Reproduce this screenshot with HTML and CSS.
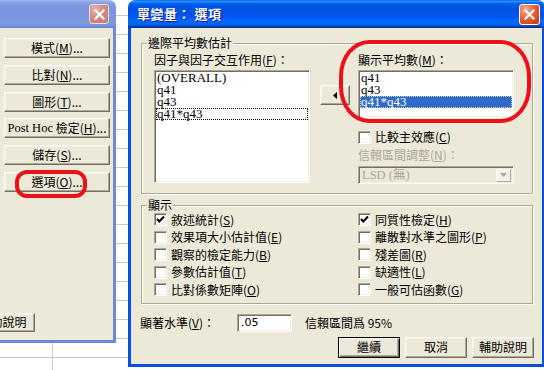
FILE: index.html
```html
<!DOCTYPE html>
<html>
<head>
<meta charset="utf-8">
<title>單變量：選項</title>
<link rel="stylesheet" href="styles.css">
</head>
<body>
<div class="desktop">
  <div class="sheet"></div>

  <div class="win win-back">
    <div class="titlebar inactive">
      <span></span>
      <span class="close close-inactive"><svg width="11" height="11" viewBox="0 0 11 11"><path d="M1.5 1.5 L9.5 9.5 M9.5 1.5 L1.5 9.5" stroke="#fff" stroke-width="2.2" stroke-linecap="square"/></svg></span>
    </div>
    <div class="win-body back-body">
      <div class="btn-stack">
        <button type="button" class="btn">模式(<u>M</u>)...</button>
        <button type="button" class="btn">比對(<u>N</u>)...</button>
        <button type="button" class="btn">圖形(<u>T</u>)...</button>
        <button type="button" class="btn"><span class="serif">Post Hoc</span>&nbsp;檢定(<u>H</u>)...</button>
        <button type="button" class="btn">儲存(<u>S</u>)...</button>
        <button type="button" class="btn">選項(<u>O</u>)...</button>
      </div>
      <button type="button" class="btn help-back">輔助說明</button>
    </div>
  </div>

  <div class="win win-main">
    <div class="titlebar active">
      <span class="title">單變量： 選項</span>
      <span class="close"><svg width="11" height="11" viewBox="0 0 11 11"><path d="M1.5 1.5 L9.5 9.5 M9.5 1.5 L1.5 9.5" stroke="#fff" stroke-width="2.2" stroke-linecap="square"/></svg></span>
    </div>
    <div class="win-body main-body">
      <fieldset class="group g-est">
        <legend>邊際平均數估計</legend>
        <div class="est-cols">
          <div class="col-left">
            <div class="lbl">因子與因子交互作用(<u>F</u>)：</div>
            <div class="listbox lb-left">
              <div class="item">(OVERALL)</div>
              <div class="item">q41</div>
              <div class="item">q43</div>
              <div class="item focus">q41*q43</div>
            </div>
          </div>
          <button type="button" class="btn arrow-btn"><svg width="4" height="7" viewBox="0 0 4 7"><polygon points="4,0 4,7 0,3.5" fill="#000"/></svg></button>
          <div class="col-right">
            <div class="lbl">顯示平均數(<u>M</u>)：</div>
            <div class="listbox lb-right">
              <div class="item">q41</div>
              <div class="item">q43</div>
              <div class="item selected">q41*q43</div>
            </div>
            <div class="chk chk-compare"><span class="box"></span>比較主效應(<u>C</u>)</div>
            <div class="lbl disabled adj-lbl">信賴區間調整(<u>N</u>)：</div>
            <div class="combo"><span class="combo-text">LSD (無)</span><span class="dd"><svg width="7" height="4" viewBox="0 0 7 4"><polygon points="0,0 7,0 3.5,4" fill="#ACA899"/></svg></span></div>
          </div>
        </div>
      </fieldset>

      <fieldset class="group g-disp">
        <legend>顯示</legend>
        <div class="chk-grid">
          <div class="chk"><span class="box"><svg width="11" height="11" viewBox="0 0 11 11"><path d="M2 5 L4.3 7.5 L9 2.5" stroke="#000" stroke-width="2" fill="none"/></svg></span>敘述統計(<u>S</u>)</div>
          <div class="chk"><span class="box"><svg width="11" height="11" viewBox="0 0 11 11"><path d="M2 5 L4.3 7.5 L9 2.5" stroke="#000" stroke-width="2" fill="none"/></svg></span>同質性檢定(<u>H</u>)</div>
          <div class="chk"><span class="box"></span>效果項大小估計值(<u>E</u>)</div>
          <div class="chk"><span class="box"></span>離散對水準之圖形(<u>P</u>)</div>
          <div class="chk"><span class="box"></span>觀察的檢定能力(<u>B</u>)</div>
          <div class="chk"><span class="box"></span>殘差圖(<u>R</u>)</div>
          <div class="chk"><span class="box"></span>參數估計值(<u>T</u>)</div>
          <div class="chk"><span class="box"></span>缺適性(<u>L</u>)</div>
          <div class="chk"><span class="box"></span>比對係數矩陣(<u>O</u>)</div>
          <div class="chk"><span class="box"></span>一般可估函數(<u>G</u>)</div>
        </div>
      </fieldset>

      <div class="sig-row">
        <span class="sig-lbl">顯著水準(<u>V</u>)：</span>
        <span class="input">.05</span>
        <span class="ci">信賴區間爲 95%</span>
      </div>

      <div class="btn-row">
        <button type="button" class="btn default">繼續</button>
        <button type="button" class="btn">取消</button>
        <button type="button" class="btn">輔助說明</button>
      </div>
    </div>
  </div>

  <div class="mark mark-list"></div>
  <div class="mark mark-opt"></div>
</div>
</body>
</html>
```

FILE: styles.css
```css
* { box-sizing: border-box; }
html, body { margin: 0; padding: 0; }
body {
  width: 544px;
  height: 370px;
  overflow: hidden;
  background: #fff;
  color: #000;
  font-family: "Noto Sans CJK TC", "Noto Sans", sans-serif;
  font-size: 12px;
  line-height: 14px;
}
.desktop { position: relative; width: 544px; height: 370px; overflow: hidden; }

.sheet {
  position: absolute;
  inset: 0;
  background:
    linear-gradient(to right, transparent 52px, #c8c8c8 52px, #c8c8c8 53px, transparent 53px),
    repeating-linear-gradient(to bottom, transparent 0, transparent 15px, #c8c8c8 15px, #c8c8c8 16px, transparent 16px, transparent 19px),
    #fff;
}

.win { position: absolute; display: flex; flex-direction: column; }
.win-back { left: -20px; top: 0; width: 136px; height: 343px; }
.win-main { left: 128px; top: 0; width: 417px; height: 367px; }

.titlebar {
  height: 28px;
  flex: none;
  border-radius: 7px 7px 0 0;
  display: flex;
  align-items: center;
  justify-content: space-between;
  padding: 0 5px 0 9px;
}
.titlebar.active {
  background: linear-gradient(to bottom, #0058ee 0%, #3593ff 4%, #288eff 6%, #127dff 8%, #036ffc 10%, #0262ee 14%, #0057e5 20%, #0054e3 24%, #0055eb 56%, #005bf5 66%, #026afe 76%, #0062ef 86%, #0052d6 92%, #0040ab 94%, #003092 100%);
}
.titlebar.inactive {
  background: linear-gradient(to bottom, #a6b9ee 0%, #8aa5e8 8%, #7b97e0 20%, #7a96df 60%, #7d99e2 85%, #6a84d2 100%);
  padding-right: 7px;
}
.title {
  color: #fff;
  font-weight: bold;
  font-size: 13px;
  letter-spacing: 0.5px;
  text-shadow: 1px 1px 0 #0a1a8a;
}
.close {
  width: 21px;
  height: 21px;
  border: 1px solid #fff;
  border-radius: 3px;
  display: flex;
  align-items: center;
  justify-content: center;
  background: radial-gradient(circle at 30% 25%, #f5b49a 0%, #e66a43 40%, #d9471d 75%, #c23a14 100%);
}
.close-inactive {
  width: 20px;
  height: 20px;
  border-color: #e9dff0;
  background: radial-gradient(circle at 30% 25%, #e9b9ad 0%, #d58a80 45%, #c8756e 100%);
}

.win-body {
  flex: 1;
  background: #ece9d8;
  border: 3px solid #0a50e0;
  border-top: 0;
  display: flex;
  flex-direction: column;
}
.back-body {
  border-color: #7088d8;
  padding: 10px 0 0 21px;
}

.btn {
  appearance: none;
  -webkit-appearance: none;
  margin: 0;
  padding: 0;
  font: inherit;
  color: #000;
  background: #ece9d8;
  border: 1px solid;
  border-color: #fff #716f64 #716f64 #fff;
  box-shadow: inset -1px -1px 0 #aca899, inset 1px 1px 0 #f1efe2;
  display: flex;
  align-items: center;
  justify-content: center;
  white-space: nowrap;
}
.btn.default {
  border-color: #000;
  box-shadow: inset 1px 1px 0 #fff, inset -1px -1px 0 #716f64, inset -2px -2px 0 #aca899;
}
.serif { font-family: "Liberation Serif", serif; font-size: 12.5px; }

.btn-stack {
  display: grid;
  grid-auto-rows: 20px;
  row-gap: 6.8px;
  width: 106px;
}
.help-back {
  width: 65px;
  height: 19px;
  margin: 121px 0 0 -34px;
}

/* group boxes */
.group {
  margin: 0;
  padding: 0;
  min-width: 0;
  border: 1px solid #aca899;
  box-shadow: inset 1px 1px 0 #fff, 1px 1px 0 #fff;
}
.group legend {
  margin-left: 5px;
  padding: 0 1px;
  line-height: 14px;
  background: #ece9d8;
}
.g-est { margin: 8px 9px 0 10px; }
.g-disp { margin: 4px 9px 0 10px; }

.est-cols {
  display: flex;
  align-items: flex-start;
  padding: 3px 0 9px 12px;
}
.lbl { height: 14px; white-space: nowrap; }
.lbl.disabled { color: #aca899; }
.col-left { width: 156px; flex: none; }
.col-right { width: 156px; flex: none; margin-left: 8px; }

.listbox {
  margin-top: 3px;
  background: #fff;
  border: 1px solid;
  border-color: #aca899 #fff #fff #aca899;
  box-shadow: inset 1px 1px 0 #716f64, inset -1px -1px 0 #f1efe2;
  padding: 1px 1px 0 1px;
  overflow: hidden;
}
.lb-left { height: 113px; }
.lb-right { height: 48px; }
.item {
  font-family: "Liberation Serif", serif;
  font-size: 13px;
  line-height: 12px;
  height: 12px;
  padding-left: 1px;
  white-space: nowrap;
}
.item.focus { outline: 1px dotted #000; outline-offset: -1px; }
.item.selected { background: #316ac5; color: #fff; outline: 1px dotted #c7d6f0; outline-offset: -1px; }

.arrow-btn {
  width: 30px;
  height: 20px;
  flex: none;
  margin: 32px 0 0 10px;
}

.chk {
  display: flex;
  align-items: center;
  white-space: nowrap;
}
.box {
  width: 13px;
  height: 13px;
  flex: none;
  margin-right: 4px;
  background: #fff;
  border: 1px solid;
  border-color: #aca899 #fff #fff #aca899;
  box-shadow: inset 1px 1px 0 #716f64, inset -1px -1px 0 #f1efe2;
  display: flex;
  align-items: center;
  justify-content: center;
}
.chk-compare { height: 14px; margin-top: 12px; }
.adj-lbl { margin-top: 4px; }

.combo {
  margin-top: 4px;
  height: 18px;
  display: flex;
  align-items: center;
  justify-content: space-between;
  background: #ece9d8;
  border: 1px solid;
  border-color: #aca899 #fff #fff #aca899;
  box-shadow: inset 1px 1px 0 #716f64, inset -1px -1px 0 #f1efe2;
  padding: 0 2px 0 3px;
}
.combo-text { color: #aca899; font-family: "Liberation Serif", "Noto Sans CJK TC", serif; font-size: 12.5px; }
.dd {
  width: 15px;
  height: 13px;
  display: flex;
  align-items: center;
  justify-content: center;
  background: #f3f2ea;
  border: 1px solid;
  border-color: #fff #aca899 #aca899 #fff;
}

.chk-grid {
  display: grid;
  grid-template-columns: 204px 1fr;
  grid-auto-rows: 17.5px;
  padding: 0 0 4px 12px;
  margin-top: -1px;
}

.sig-row {
  display: flex;
  align-items: center;
  height: 18px;
  margin-top: 10px;
  padding-left: 9px;
  white-space: nowrap;
}
.sig-lbl { width: 97px; flex: none; }
.input {
  width: 55px;
  height: 18px;
  flex: none;
  background: #fff;
  border: 1px solid;
  border-color: #aca899 #fff #fff #aca899;
  box-shadow: inset 1px 1px 0 #716f64, inset -1px -1px 0 #f1efe2;
  padding-left: 3px;
  font-family: "DejaVu Sans", sans-serif;
  font-size: 11px;
  line-height: 16px;
}
.ci { margin-left: 13px; }

.btn-row {
  display: flex;
  justify-content: flex-end;
  gap: 5px;
  margin-top: 5px;
  padding-right: 8px;
}
.btn-row .btn { width: 62px; height: 21px; }

.mark {
  position: absolute;
  border: 4px solid #ee1018;
}
.mark-list { left: 339px; top: 40px; width: 192px; height: 83px; border-radius: 30px / 36px; }
.mark-opt { left: 15px; top: 170px; width: 72px; height: 28px; border-radius: 12px; }
```
